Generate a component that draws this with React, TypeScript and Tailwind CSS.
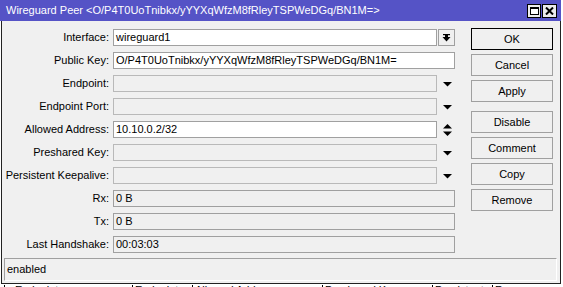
import React from "react";

type Row = {
  label: string;
  value?: string;
  kind: "select" | "full" | "drop" | "updown" | "plain";
  active?: boolean;
};

const rows: Row[] = [
  { label: "Interface:", value: "wireguard1", kind: "select", active: true },
  { label: "Public Key:", value: "O/P4T0UoTnibkx/yYYXqWfzM8fRleyTSPWeDGq/BN1M=", kind: "full", active: true },
  { label: "Endpoint:", kind: "drop" },
  { label: "Endpoint Port:", kind: "drop" },
  { label: "Allowed Address:", value: "10.10.0.2/32", kind: "updown", active: true },
  { label: "Preshared Key:", kind: "drop" },
  { label: "Persistent Keepalive:", kind: "drop" },
  { label: "Rx:", value: "0 B", kind: "plain" },
  { label: "Tx:", value: "0 B", kind: "plain" },
  { label: "Last Handshake:", value: "00:03:03", kind: "plain" },
];

const buttons = ["OK", "Cancel", "Apply", "Disable", "Comment", "Copy", "Remove"];

function DownTri() {
  return (
    <svg width="9" height="5" viewBox="0 0 9 5">
      <polygon points="0,0 9,0 4.5,4.5" fill="#000" />
    </svg>
  );
}

function UpDown() {
  return (
    <svg width="9" height="12" viewBox="0 0 9 12">
      <polygon points="0,4.5 9,4.5 4.5,0" fill="#000" />
      <polygon points="0,7.5 9,7.5 4.5,12" fill="#000" />
    </svg>
  );
}

function SelectIcon() {
  return (
    <svg width="9" height="8" viewBox="0 0 9 8">
      <rect x="1" y="0" width="7" height="1.2" fill="#000" />
      <rect x="3" y="1" width="3" height="2" fill="#000" />
      <polygon points="0.5,3 8.5,3 4.5,7.5" fill="#000" />
    </svg>
  );
}

function Field({ row }: { row: Row }) {
  const full = row.kind === "full" || row.kind === "plain";
  const cls = row.active
    ? "bg-white border-[#a0a0a0]"
    : row.kind === "plain"
      ? "bg-[#f0f0f0] border-[#a0a0a0]"
      : "bg-[#f0f0f0] border-[#b9b9b9]";
  return (
    <div className="flex items-center">
      <div className={`${full ? "w-[342px]" : "w-[324px]"} h-[17px] border ${cls} pl-[2px] flex items-center whitespace-nowrap overflow-hidden leading-none`}>
        {row.value}
      </div>
      {row.kind === "select" && (
        <div className="ml-px w-[17px] h-[17px] border border-[#a0a0a0] bg-[#f0f0f0] flex items-center justify-center">
          <SelectIcon />
        </div>
      )}
      {row.kind === "drop" && (
        <div className="w-[18px] h-[17px] flex items-center justify-center pt-[1px] pl-[2px]">
          <DownTri />
        </div>
      )}
      {row.kind === "updown" && (
        <div className="w-[18px] h-[17px] flex items-center justify-center pl-[2px]">
          <UpDown />
        </div>
      )}
    </div>
  );
}

export default function App() {
  return (
    <div className="w-[563px] h-[287px] overflow-hidden bg-white font-['Liberation_Sans',Arial,sans-serif] text-[11px] text-black">
      <div className="w-[561px]">
        {/* title bar */}
        <div className="h-[21px] bg-[#5553c6] flex items-center justify-between pl-[6px] pr-[4px]">
          <span className="text-white text-[11px] leading-none whitespace-nowrap">
            Wireguard Peer &lt;O/P4T0UoTnibkx/yYYXqWfzM8fRleyTSPWeDGq/BN1M=&gt;
          </span>
          <div className="flex gap-px">
            <div className="w-[14px] h-[14px] border border-black bg-[#ececec] flex items-center justify-center">
              <div className="w-[9px] h-[8px] border border-black border-t-2 bg-white" />
            </div>
            <div className="w-[15px] h-[14px] border border-black bg-[#ececec] flex items-center justify-center">
              <svg width="9" height="8" viewBox="0 0 9 8">
                <path d="M1 0.5 L8 7.5 M8 0.5 L1 7.5" stroke="#000" strokeWidth="2" />
              </svg>
            </div>
          </div>
        </div>

        {/* body */}
        <div className="ml-px w-[560px] h-[263px] bg-[#f0f0f0] border-l border-r border-b border-[#222]">
          <div className="flex">
            <div className="flex flex-col gap-[6px] pt-[8px]">
              {rows.map((r) => (
                <div key={r.label} className="flex items-center h-[17px]">
                  <div className="w-[107px] text-right pr-0 whitespace-nowrap leading-none">{r.label}</div>
                  <div className="ml-[4px]">
                    <Field row={r} />
                  </div>
                </div>
              ))}
            </div>
            <div className="ml-[16px] pt-[7px] flex flex-col gap-[4px]">
              {buttons.map((b) => (
                <div
                  key={b}
                  className={`w-[82px] h-[22px] flex items-center justify-center leading-none border ${
                    b === "OK" ? "border-black" : "border-[#a0a0a0]"
                  } ${b === "Disable" ? "mt-[5px]" : ""}`}
                >
                  {b}
                </div>
              ))}
            </div>
          </div>

          {/* status bar */}
          <div className="mt-[5px] ml-[2px] w-[553px] h-[23px] border border-t-[#a0a0a0] border-l-[#a0a0a0] border-r-white border-b-white flex items-center pl-[2px] leading-none">
            enabled
          </div>
        </div>
      </div>

      {/* list behind the dialog */}
      <div className="flex h-[20px] pt-[1px] leading-none whitespace-nowrap">
        <div className="ml-[4px] w-[128px] border-l border-black pl-[10px]">Endpoint</div>
        <div className="w-[60px] border-l border-black pl-[2px]">Endpoint</div>
        <div className="w-[130px] border-l border-black pl-[2px]">Allowed Address</div>
        <div className="w-[110px] border-l border-black pl-[2px]">Preshared Key</div>
        <div className="w-[60px] border-l border-black pl-[2px]">Persistent</div>
        <div className="w-[60px] border-l border-black pl-[2px]">Rx</div>
      </div>
    </div>
  );
}
